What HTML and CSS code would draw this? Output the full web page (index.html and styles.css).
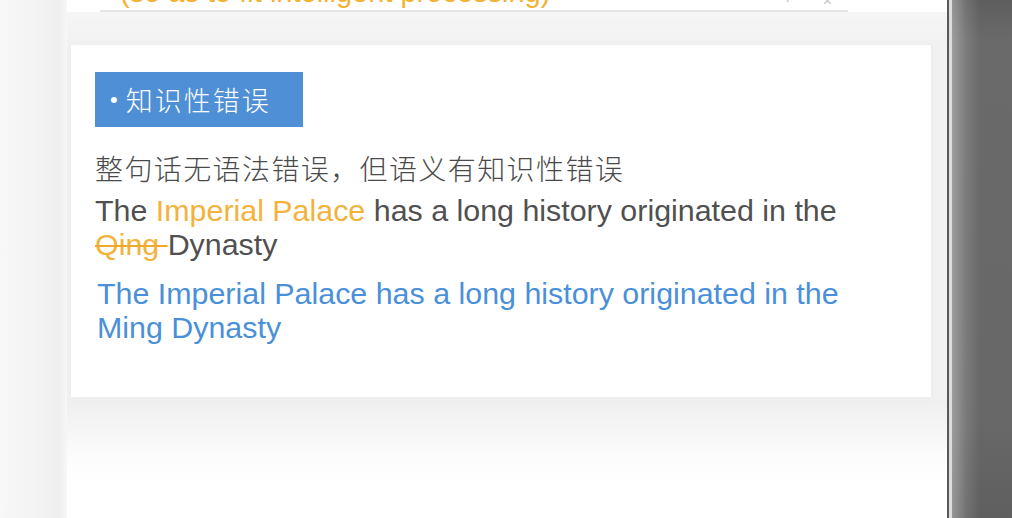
FILE: index.html
```html
<!DOCTYPE html>
<html lang="zh">
<head>
<meta charset="utf-8">
<title>知识性错误</title>
<link rel="stylesheet" href="styles.css">
</head>
<body>
<div class="page">
  <div class="side-left"></div>
  <div class="main">
    <div class="prev-row">
      <span class="prev-text">(so as to fit intelligent processing)</span>
      <span class="prev-icons">· ×</span>
    </div>
    <div class="shade">
      <div class="card">
        <div class="badge"><span class="dot">•</span>知识性错误</div>
        <p class="desc">整句话无语法错误，但语义有知识性错误</p>
        <p class="orig">The <span class="hl">Imperial Palace</span> has a long history originated in the <span class="del">Qing </span>Dynasty</p>
        <p class="fix">The Imperial Palace has a long history originated in the Ming Dynasty</p>
      </div>
    </div>
  </div>
  <div class="divider"></div>
  <div class="gap"></div>
  <div class="scrollband"></div>
</div>
</body>
</html>
```

FILE: styles.css
```css
html, body {
  margin: 0;
  padding: 0;
  background: #ffffff;
}
body {
  font-family: "Liberation Sans", "Noto Sans CJK SC", sans-serif;
  overflow: hidden;
}
.page {
  display: flex;
  width: 1012px;
  height: 518px;
  overflow: hidden;
}
.side-left {
  width: 67px;
  flex: none;
  background: linear-gradient(to right, #f8f8f8 0%, #f4f4f4 45%, #efefef 90%, #f7f7f7 100%);
}
.main {
  width: 880px;
  flex: none;
  background: #ffffff;
  display: flex;
  flex-direction: column;
}
.prev-row {
  height: 10px;
  margin-left: 33px;
  width: 748px;
  border-bottom: 2px solid #e6e6e6;
  display: flex;
  justify-content: space-between;
  overflow: hidden;
}
.prev-text {
  display: block;
  margin-top: -25px;
  margin-left: 20px;
  font-size: 29px;
  line-height: 34px;
  color: #f2b332;
  white-space: nowrap;
}
.prev-icons {
  display: block;
  margin-top: -7px;
  margin-right: 2px;
  font-size: 16px;
  line-height: 16px;
  color: #c4c4c4;
  letter-spacing: 14px;
}
.shade {
  flex: 1;
  background: linear-gradient(to bottom, #f6f6f6 0px, #f1f1f1 33px, #f1f1f1 385px, #efefef 390px, #fbfbfb 440px, #ffffff 470px);
  padding: 33px 0 0 4px;
}
.card {
  width: 860px;
  height: 352px;
  box-sizing: border-box;
  background: #ffffff;
  padding: 27px 24px 0 24px;
  box-shadow: 0 0 6px rgba(0, 0, 0, 0.03);
}
.badge {
  display: inline-flex;
  align-items: center;
  width: 208px;
  height: 55px;
  box-sizing: border-box;
  padding-left: 15px;
  background: #4f8fd6;
  color: #ffffff;
  font-family: "Noto Sans CJK SC", sans-serif;
  font-weight: 300;
  font-size: 27px;
  letter-spacing: 2px;
}
.badge .dot {
  font-family: "Liberation Sans", sans-serif;
  font-size: 22px;
  margin-right: 8px;
  letter-spacing: 0;
}
.desc {
  margin: 24px 0 0 0;
  font-family: "Noto Sans CJK SC", sans-serif;
  font-weight: 300;
  font-size: 28px;
  letter-spacing: 1.4px;
  line-height: 34px;
  color: #4a4a4a;
}
.orig {
  margin: 8px 0 0 0;
  width: 760px;
  font-size: 30.4px;
  line-height: 34px;
  color: #505050;
}
.hl {
  color: #f3b23c;
}
.del {
  color: #f3b23c;
  text-decoration: line-through;
  text-decoration-color: #f0a92c;
  text-decoration-thickness: 2px;
}
.fix {
  margin: 15px 0 0 2px;
  width: 760px;
  font-size: 30.4px;
  line-height: 34px;
  color: #4a90d9;
}
.divider {
  width: 2px;
  flex: none;
  background: #595959;
}
.gap {
  width: 3px;
  flex: none;
  background: #dcdcdc;
}
.scrollband {
  flex: 1;
  background:
    linear-gradient(to right, rgba(255,255,255,0.35) 0px, rgba(255,255,255,0.12) 14px, rgba(255,255,255,0) 28px),
    linear-gradient(to bottom, #5e5e5e 0px, #6a6a6a 40px, #686868 420px, #5f5f5f 518px);
}
```
